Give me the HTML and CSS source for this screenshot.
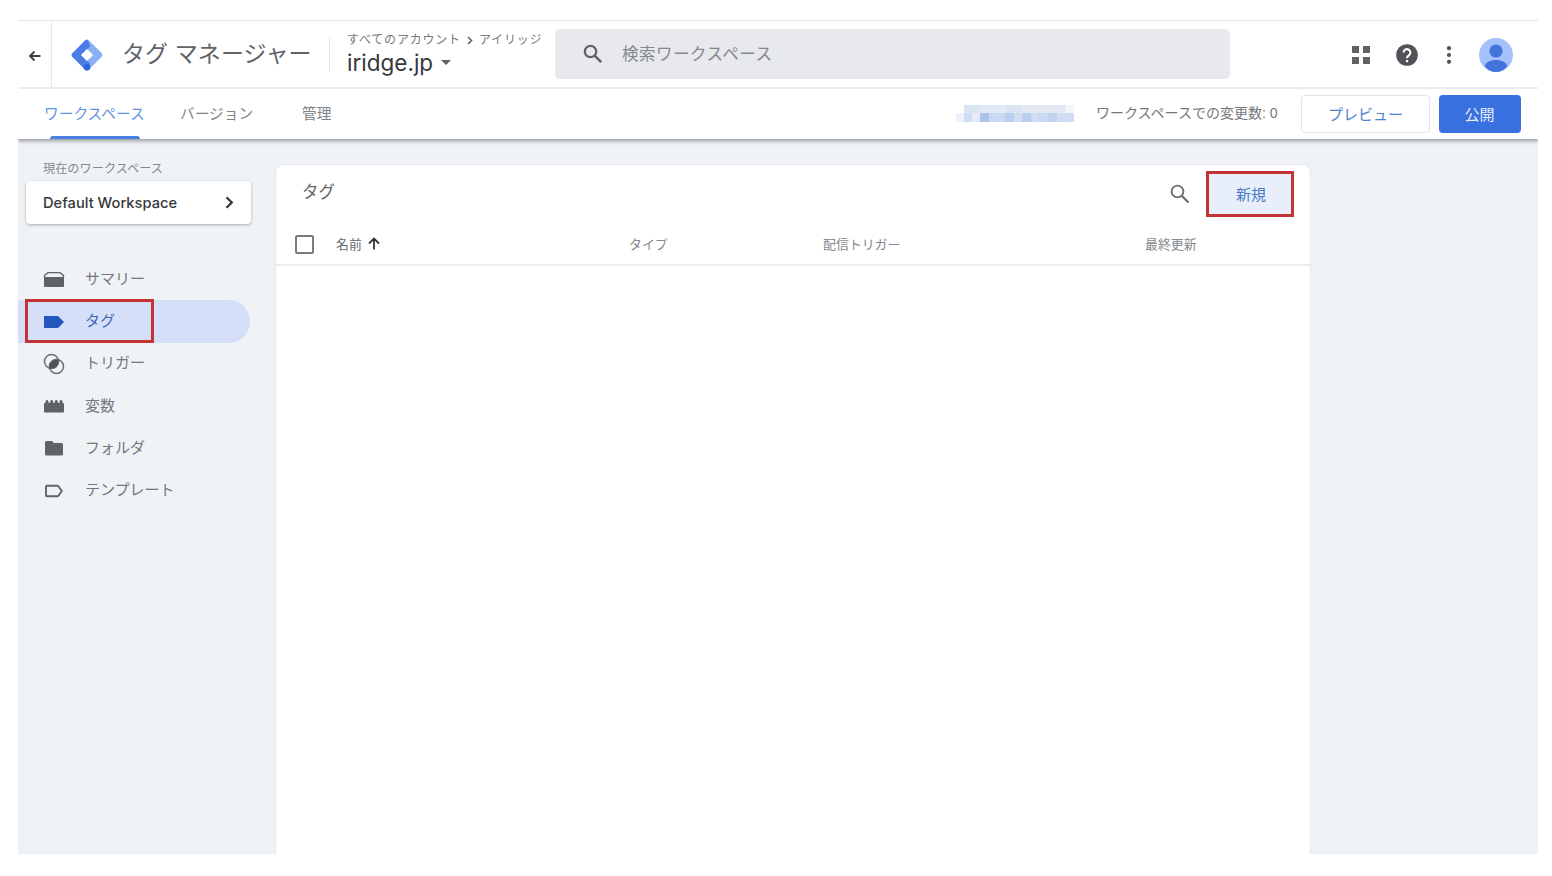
FILE: index.html
```html
<!DOCTYPE html>
<html lang="ja">
<head>
<meta charset="utf-8">
<title>タグ マネージャー</title>
<link rel="stylesheet" href="styles.css">
</head>
<body>
<div class="app">
  <header class="header">
    <a class="back"><svg width="14" height="14" viewBox="0 0 14 14"><path d="M12.500 7H2.500M6.500 2.500L2 7l4.500 4.500" fill="none" stroke="#3c4043" stroke-width="1.900"/></svg></a>
    <svg class="logo" width="34" height="34" viewBox="0 0 34 34">
      <path d="M14 3.500 15.200 2.300Q17 .8 18.800 2.300L31.800 15.200Q33.400 17 31.800 18.800L20 30.500 14 25.500 22.500 17 14 8.500Z" fill="#8ab0f5"/>
      <path d="M15.200 2.300Q16.300 1.400 17.500 1.700L20.500 8 11.500 17 20 25.500V30.500L18.800 31.700Q17 33.200 15.200 31.700L2.200 18.800Q.6 17 2.200 15.200Z" fill="#4a7ee6"/>
      <circle cx="17" cy="29.200" r="3.300" fill="#2f66d6"/>
      <path d="M17 11 23 17 17 23 11 17Z" fill="#fff"/>
    </svg>
    <h1 class="product">タグ マネージャー</h1>
    <div class="account">
      <div class="crumbs"><span>すべてのアカウント</span><svg width="6" height="9" viewBox="0 0 6 9"><path d="M1 1l3.500 3.500L1 8" fill="none" stroke="#5f6368" stroke-width="1.600"/></svg><span>アイリッジ</span></div>
      <div class="container-name"><span>iridge.jp</span><svg width="10" height="5" viewBox="0 0 10 5"><path d="M0 0h10L5 5z" fill="#5f6368"/></svg></div>
    </div>
    <div class="search">
      <svg width="20" height="20" viewBox="0 0 20 20"><circle cx="7.500" cy="7.500" r="5.700" fill="none" stroke="#5f6368" stroke-width="2.300"/><path d="M11.700 11.700 18.200 18.200" stroke="#5f6368" stroke-width="2.600"/></svg>
      <span>検索ワークスペース</span>
    </div>
    <svg class="apps" width="18" height="18" viewBox="0 0 18 18" fill="#5f6368"><path d="M0 0h7v7H0zM11 0h7v7h-7zM0 11h7v7H0zM11 11h7v7h-7z"/></svg>
    <svg class="help" width="22" height="22" viewBox="0 0 22 22"><circle cx="11" cy="11" r="10.800" fill="#505357"/><path d="M7.600 8.600a3.400 3.400 0 1 1 5.500 2.600C11.800 12.200 11 12.700 11 14.300" fill="none" stroke="#fff" stroke-width="2.100"/><path d="M9.900 16h2.200v2.200H9.900z" fill="#fff"/></svg>
    <svg class="more" width="6" height="18" viewBox="0 0 6 18" fill="#505357"><circle cx="3" cy="2.200" r="2.100"/><circle cx="3" cy="9" r="2.100"/><circle cx="3" cy="15.800" r="2.100"/></svg>
    <svg class="avatar" width="34" height="34" viewBox="0 0 34 34"><circle cx="17" cy="17" r="17" fill="#a3c2fa"/><circle cx="17" cy="13" r="6.600" fill="#4573dc"/><path d="M5.800 28C7 24 11.500 22 17 22s10 2 11.200 6C25.500 32 21.500 34 17 34S8.500 32 5.800 28z" fill="#4573dc"/></svg>
  </header>

  <nav class="tabs">
    <a class="tab tab-active">ワークスペース</a>
    <a class="tab tab-version">バージョン</a>
    <a class="tab tab-admin">管理</a>
    <svg class="masked" width="118" height="17" viewBox="0 0 118 17">
      <path d="M8 0h102v8H8z" fill="#e3eaf5"/><path d="M8 0h16v8H8zM49 0h17v8H49z" fill="#dbe4f2"/><path d="M110 0h8v8h-8z" fill="#f3f6fb"/>
      <path d="M0 8h118v9H0z" fill="#cfdcf1"/><path d="M0 8h8v9H0z" fill="#edf2fa"/><path d="M16 8h8v9h-8z" fill="#e3ebf7"/><path d="M24 8h9v9h-9z" fill="#aac3e8"/><path d="M33 8h16v9H33zM82 8h10v9H82z" fill="#c9d9f1"/><path d="M49 8h9v9h-9zM66 8h9v9h-9z" fill="#b8cfef"/><path d="M92 8h9v9h-9z" fill="#bfd2ef"/>
    </svg>
    <span class="changes">ワークスペースでの変更数: 0</span>
    <button class="btn btn-preview">プレビュー</button>
    <button class="btn btn-publish">公開</button>
  </nav>

  <div class="content">
    <aside class="sidebar">
      <div class="ws-label">現在のワークスペース</div>
      <div class="ws-card"><span>Default Workspace</span><svg width="9" height="13" viewBox="0 0 9 13"><path d="M1.500 1.300 6.800 6.500 1.500 11.700" fill="none" stroke="#303337" stroke-width="2.200"/></svg></div>
      <ul class="menu">
        <li class="item"><svg width="22" height="22" viewBox="0 0 22 22"><path d="M1.500 10V7.500L5 4.700h12l3.500 2.800V10" fill="none" stroke="#5f6368" stroke-width="1.300"/><path d="M1 9h20v9q0 1-1 1H2q-1 0-1-1z" fill="#5f6368"/></svg><span>サマリー</span></li>
        <li class="item item-active"><svg width="22" height="22" viewBox="0 0 22 22"><path d="M1 6h14l6 6-6 6H1z" fill="#2456bd"/></svg><span>タグ</span></li>
        <li class="item"><svg width="22" height="22" viewBox="0 0 22 22"><circle cx="8.500" cy="8.500" r="7" fill="none" stroke="#6d7074" stroke-width="1.500"/><circle cx="13.500" cy="13.500" r="7" fill="none" stroke="#6d7074" stroke-width="1.500"/><path d="M15.300 6.700A7 7 0 0 0 6.700 15.300 7 7 0 0 0 15.300 6.700z" fill="#505357"/></svg><span>トリガー</span></li>
        <li class="item"><svg width="22" height="22" viewBox="0 0 22 22" fill="#5f6368"><rect x="1" y="8" width="20" height="9.500" rx="1"/><path d="M2 9l.7-3q.2-1 1.300-1t1.300 1L6 9zM6.700 9l.7-3q.2-1 1.300-1T10 6l.7 3zM11.300 9l.7-3q.2-1 1.300-1t1.300 1l.7 3zM16 9l.7-3q.2-1 1.300-1t1.300 1l.7 3z"/></svg><span>変数</span></li>
        <li class="item"><svg width="22" height="22" viewBox="0 0 22 22"><path d="M3.500 4h5.500l2 2h7.500q1.500 0 1.500 1.500v9.500q0 1.500-1.500 1.500h-15Q2 18.500 2 17V5.500Q2 4 3.500 4z" fill="#5f6368"/></svg><span>フォルダ</span></li>
        <li class="item"><svg width="22" height="22" viewBox="0 0 22 22"><path d="M4 5.700h10.200q.8 0 1.200.6l3.400 4.700-3.400 4.700q-.4.600-1.200.6H4q-1 0-1-1V6.700q0-1 1-1z" fill="none" stroke="#5f6368" stroke-width="1.900"/></svg><span>テンプレート</span></li>
      </ul>
    </aside>

    <main class="panel">
      <div class="panel-head">
        <h2>タグ</h2>
        <svg width="20" height="20" viewBox="0 0 20 20"><circle cx="7.500" cy="7.500" r="5.900" fill="none" stroke="#6b6e72" stroke-width="1.900"/><path d="M11.700 11.700 18.500 18.500" stroke="#6b6e72" stroke-width="2.200"/></svg>
        <button class="new">新規</button>
      </div>
      <div class="columns">
        <span class="check"></span>
        <span class="name">名前<svg width="12" height="13" viewBox="0 0 12 13"><path d="M6 12.500V2M1 6.500 6 1.600l5 4.900" fill="none" stroke="#303337" stroke-width="1.800"/></svg></span>
        <span>タイプ</span>
        <span>配信トリガー</span>
        <span>最終更新</span>
      </div>
    </main>
  </div>
</div>
</body>
</html>
```

FILE: styles.css
```css
*, *::before, *::after { box-sizing: border-box; }
body {
  margin: 0;
  background: #fff;
  font-family: "Liberation Sans", "Noto Sans CJK JP", sans-serif;
  color: #6b6e72;
}
svg { display: block; flex: none; }
button { font-family: inherit; padding: 0; }
h1, h2, ul { margin: 0; padding: 0; font-weight: 400; list-style: none; }
span, a, h1, h2 { white-space: nowrap; }

.app {
  width: 1520px;
  height: 834px;
  margin: 20px 0 0 18px;
  display: flex;
  flex-direction: column;
  background: #eff3f6;
  overflow: hidden;
}

/* Top bar */
.header {
  position: relative;
  z-index: 1;
  height: 69px;
  display: flex;
  align-items: center;
  background: #fff;
  border-top: 1px solid #e3e4e6;
  border-bottom: 2px solid #ebecee;
}
.back {
  width: 34px;
  height: 100%;
  padding: 4px 0 0 10px;
  display: flex;
  align-items: center;
  border-right: 1px solid #e6e7e9;
}
.logo { margin: 1px 0 0 18px; }
.product {
  width: 208px;
  height: 34px;
  margin: 2px 0 0 18px;
  font-size: 23px;
  letter-spacing: .1px;
  line-height: 32px;
  color: #5f6368;
  border-right: 1px solid #e3e4e6;
}
.account { width: 225px; padding-left: 17px; }
.crumbs {
  display: flex;
  align-items: center;
  gap: 6px;
  font-size: 12px;
  letter-spacing: .8px;
  line-height: 18px;
  color: #77797d;
}
.container-name {
  display: flex;
  align-items: center;
  gap: 8px;
  height: 28px;
  padding-bottom: 1px;
  font-family: Inter, sans-serif;
  font-size: 22.500px;
  color: #35383c;
}
.search {
  width: 675px;
  height: 50px;
  padding-left: 28px;
  display: flex;
  align-items: center;
  gap: 19px;
  border-radius: 5px;
  background: #e7e9ec;
  font-size: 16.500px;
  letter-spacing: .5px;
  color: #85888c;
}
.search span { padding-bottom: 2px; }
.apps { margin: 1px 0 0 122px; }
.help { margin: 1px 0 0 26px; }
.more { margin: 1px 0 0 28px; }
.avatar { margin: 1px 0 0 27px; }

/* Workspace tabs */
.tabs {
  position: relative;
  height: 50px;
  padding-left: 26px;
  display: flex;
  align-items: center;
  background: #fff;
  box-shadow: 0 1px 4px 1px rgba(60, 64, 67, .5);
  font-size: 14.700px;
}
.tab { height: 50px; line-height: 51px; color: #808387; }
.tab-active {
  width: 101px;
  display: flex;
  flex-direction: column;
  color: #6495dc;
}
.tab-active::after {
  content: "";
  width: 90px;
  height: 3px;
  margin: -4px 0 0 6px;
  border-radius: 3px 3px 0 0;
  background: #4a7de2;
}
.tab-version { width: 87px; margin-left: 35px; }
.tab-admin { margin-left: 35px; }
.masked { margin: -1px 0 0 auto; }
.changes { width: 182px; margin-left: 22px; padding-bottom: 4px; font-size: 14px; color: #74777b; }
.btn { height: 38px; border-radius: 4px; font-size: 15px; }
.btn-preview { width: 129px; margin-left: 23px; padding-bottom: 2px; background: #fff; border: 1px solid #e2e4e8; color: #4e83cf; }
.btn-publish { width: 82px; margin: 0 17px 0 9px; padding: 0 1px 1px 0; border: 0; background: #3870df; color: #e6eefc; }

/* Page body */
.content { flex: 1; display: flex; align-items: stretch; }
.sidebar { width: 257px; padding-top: 21px; }
.ws-label { padding-left: 25px; font-size: 12.200px; line-height: 18px; color: #85888c; }
.ws-card {
  width: 225px;
  height: 43px;
  margin: 3px 0 0 8px;
  padding: 0 17px;
  display: flex;
  align-items: center;
  justify-content: space-between;
  border-radius: 4px;
  background: #fff;
  box-shadow: 0 1px 3px rgba(60, 64, 67, .4);
  font: 500 14.700px Inter, sans-serif;
  color: #35383c;
}
.menu { padding-top: 34px; }
.item {
  width: 232px;
  height: 42.300px;
  padding-left: 25px;
  display: flex;
  align-items: center;
  gap: 20px;
  font-size: 15px;
  color: #74777b;
}
.item span { line-height: 22px; padding-bottom: 1px; }
.item-active {
  position: relative;
  border-radius: 0 21px 21px 0;
  background: #d5e0f8;
  color: #3a68b5;
}
.item-active::after {
  content: "";
  position: absolute;
  left: 7px;
  top: -1px;
  width: 129px;
  height: 44px;
  border: 3px solid #c63336;
}
.panel {
  width: 1036px;
  margin-top: 25px;
  background: #fff;
  border: solid #e6e8eb;
  border-width: 1px 1px 0;
  border-radius: 8px 8px 0 0;
}
.panel-head {
  height: 58px;
  padding: 0 16px 0 26px;
  display: flex;
  align-items: center;
}
.panel-head h2 { flex: 1; padding-bottom: 6px; font-size: 16.500px; color: #65686c; }
.new {
  width: 88px;
  height: 46px;
  margin-left: 16px;
  padding: 0 0 2px 2px;
  border: 3px solid #c63336;
  background: #e8effb;
  color: #4778c2;
  font-size: 15px;
}
.columns {
  height: 43px;
  padding-left: 19px;
  display: grid;
  grid-template-columns: 41px 293px 194px 322px 100px;
  align-items: center;
  border-bottom: 2px solid #ebecee;
  font-size: 12.900px;
  color: #85888c;
}
.check { width: 19px; height: 19px; margin-top: 1px; border: 2px solid #777a7e; border-radius: 2px; }
.name { display: flex; align-items: center; gap: 6px; color: #65686c; }
```
